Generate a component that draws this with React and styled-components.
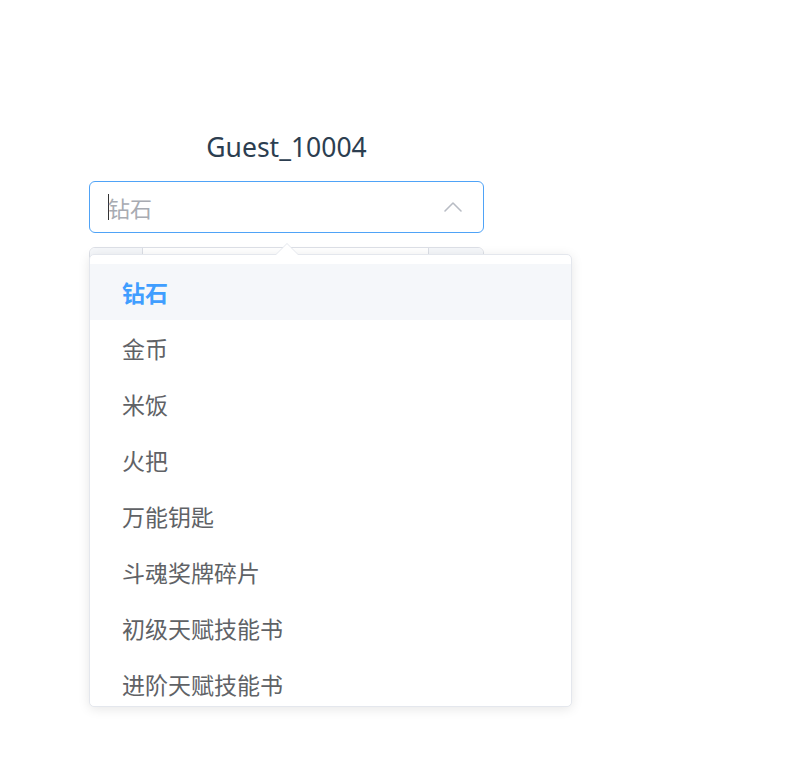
import React from "react";
import styled, { createGlobalStyle } from "styled-components";

const Global = createGlobalStyle`
  html, body { margin: 0; padding: 0; background: #fff; }
  body { font-family: "Noto Sans", "Noto Sans CJK SC", sans-serif; }
  * { box-sizing: border-box; }
`;

const Page = styled.div`
  width: 800px;
  height: 763px;
  padding-top: 128px;
  padding-left: 89px;
`;

const Panel = styled.div`
  position: relative;
  width: 395px;
  display: flex;
  flex-direction: column;
`;

const Title = styled.div`
  text-align: center;
  font-size: 26.5px;
  line-height: 38px;
  color: #2c3e50;
  margin-bottom: 15px;
`;

const SelectBox = styled.div`
  height: 52px;
  border: 1.5px solid #4fa3f7;
  border-radius: 6px;
  display: flex;
  align-items: center;
  padding: 0 20px 0 18px;
  background: #fff;
`;

const Placeholder = styled.div`
  flex: 1;
  display: flex;
  align-items: center;
  font-family: "Noto Sans CJK SC", sans-serif;
  font-size: 22px;
  color: #a8abb2;
  &::before {
    content: "";
    width: 1px;
    height: 26px;
    background: #333;
    margin-right: -1px;
  }
`;

const Chevron = styled.svg`
  width: 20px;
  height: 20px;
  display: block;
`;

const NumberBox = styled.div`
  margin-top: 14px;
  height: 52px;
  border: 1px solid #dcdfe6;
  border-radius: 6px;
  display: flex;
  overflow: hidden;
`;

const StepBtn = styled.div`
  width: ${(p) => p.$w}px;
  background: #f5f7fa;
  border-${(p) => p.$side}: 1px solid #dcdfe6;
`;

const NumberField = styled.div`
  flex: 1;
  background: #fff;
`;

const Dropdown = styled.div`
  position: absolute;
  left: 0;
  top: 126px;
  width: 483px;
  height: 453px;
  background: #fff;
  border: 1px solid #e4e7ed;
  border-radius: 5px;
  box-shadow: 0 2px 12px rgba(0, 0, 0, 0.1);
  &::before {
    content: "";
    position: absolute;
    top: -12px;
    left: 185px;
    border: 12px solid transparent;
    border-top: 0;
    border-bottom-color: #e4e7ed;
  }
  &::after {
    content: "";
    position: absolute;
    top: -11px;
    left: 186px;
    border: 11px solid transparent;
    border-top: 0;
    border-bottom-color: #fff;
  }
`;

const List = styled.ul`
  list-style: none;
  margin: 0;
  padding: 9px 0 0;
  height: 100%;
  overflow: hidden;
  border-radius: 5px;
`;

const Item = styled.li`
  height: 56px;
  line-height: 56px;
  padding-left: 32px;
  font-family: "Noto Sans CJK SC", sans-serif;
  font-size: 23px;
  color: ${(p) => (p.$selected ? "#409eff" : "#606266")};
  font-weight: ${(p) => (p.$selected ? 700 : 400)};
  background: ${(p) => (p.$selected ? "#f5f7fa" : "#fff")};
`;

const options = [
  "钻石",
  "金币",
  "米饭",
  "火把",
  "万能钥匙",
  "斗魂奖牌碎片",
  "初级天赋技能书",
  "进阶天赋技能书",
];

export default function App() {
  return (
    <>
      <Global />
      <Page>
        <Panel>
          <Title>Guest_10004</Title>
          <SelectBox>
            <Placeholder>钻石</Placeholder>
            <Chevron viewBox="0 0 20 20" fill="none">
              <path d="M2 14 L10 6 L18 14" stroke="#b8bcc4" strokeWidth="1.6" strokeLinecap="round" strokeLinejoin="round" />
            </Chevron>
          </SelectBox>
          <NumberBox>
            <StepBtn $w={53} $side="right" />
            <NumberField />
            <StepBtn $w={55} $side="left" />
          </NumberBox>
          <Dropdown>
            <List>
              {options.map((o, i) => (
                <Item key={o} $selected={i === 0}>{o}</Item>
              ))}
            </List>
          </Dropdown>
        </Panel>
      </Page>
    </>
  );
}
